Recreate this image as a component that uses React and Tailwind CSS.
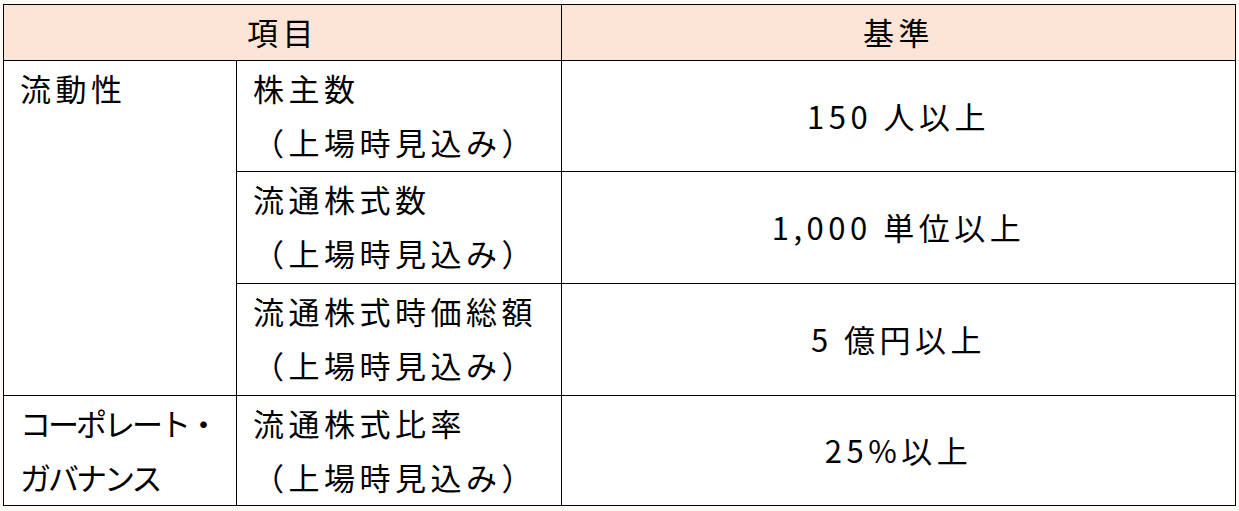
import React from "react";

const font = { fontFamily: '"Noto Sans CJK JP", "Noto Sans", sans-serif' };

function Sub({ title }) {
    return (
        <td className="border border-black align-top pl-[16px] pt-0">
            <div className="leading-[54px] whitespace-nowrap">{title}</div>
            <div className="leading-[54px] whitespace-nowrap">（上場時見込み）</div>
        </td>
    );
}

function Value({ children }) {
    return (
        <td className="border border-black text-center align-middle whitespace-nowrap">
            {children}
        </td>
    );
}

export default function App() {
    return (
        <div
            className="min-h-screen w-full bg-[#fdfaf4] pl-[3px] pt-[4px]"
            style={font}
        >
            <table className="border-collapse bg-white text-black text-[31px] tracking-[4.5px] w-[1232px] table-fixed">
                <colgroup>
                    <col className="w-[233px]" />
                    <col className="w-[325px]" />
                    <col className="w-[674px]" />
                </colgroup>
                <thead>
                    <tr className="h-[56px] bg-[#fce4d6]">
                        <th colSpan={2} className="border border-black font-normal text-center">
                            項目
                        </th>
                        <th className="border border-black font-normal text-center">
                            基準
                        </th>
                    </tr>
                </thead>
                <tbody>
                    <tr className="h-[111px]">
                        <td rowSpan={3} className="border border-black align-top pl-[16px] pt-0">
                            <div className="leading-[54px]">流動性</div>
                        </td>
                        <Sub title="株主数" />
                        <Value>150 人以上</Value>
                    </tr>
                    <tr className="h-[112px]">
                        <Sub title="流通株式数" />
                        <Value>1,000 単位以上</Value>
                    </tr>
                    <tr className="h-[112px]">
                        <Sub title="流通株式時価総額" />
                        <Value>5 億円以上</Value>
                    </tr>
                    <tr className="h-[110px]">
                        <td className="border border-black align-top pl-[16px] pt-0 tracking-[-3px]">
                            <div className="leading-[54px] whitespace-nowrap">コーポレート・</div>
                            <div className="leading-[54px] whitespace-nowrap">ガバナンス</div>
                        </td>
                        <Sub title="流通株式比率" />
                        <Value>25%以上</Value>
                    </tr>
                </tbody>
            </table>
        </div>
    );
}
